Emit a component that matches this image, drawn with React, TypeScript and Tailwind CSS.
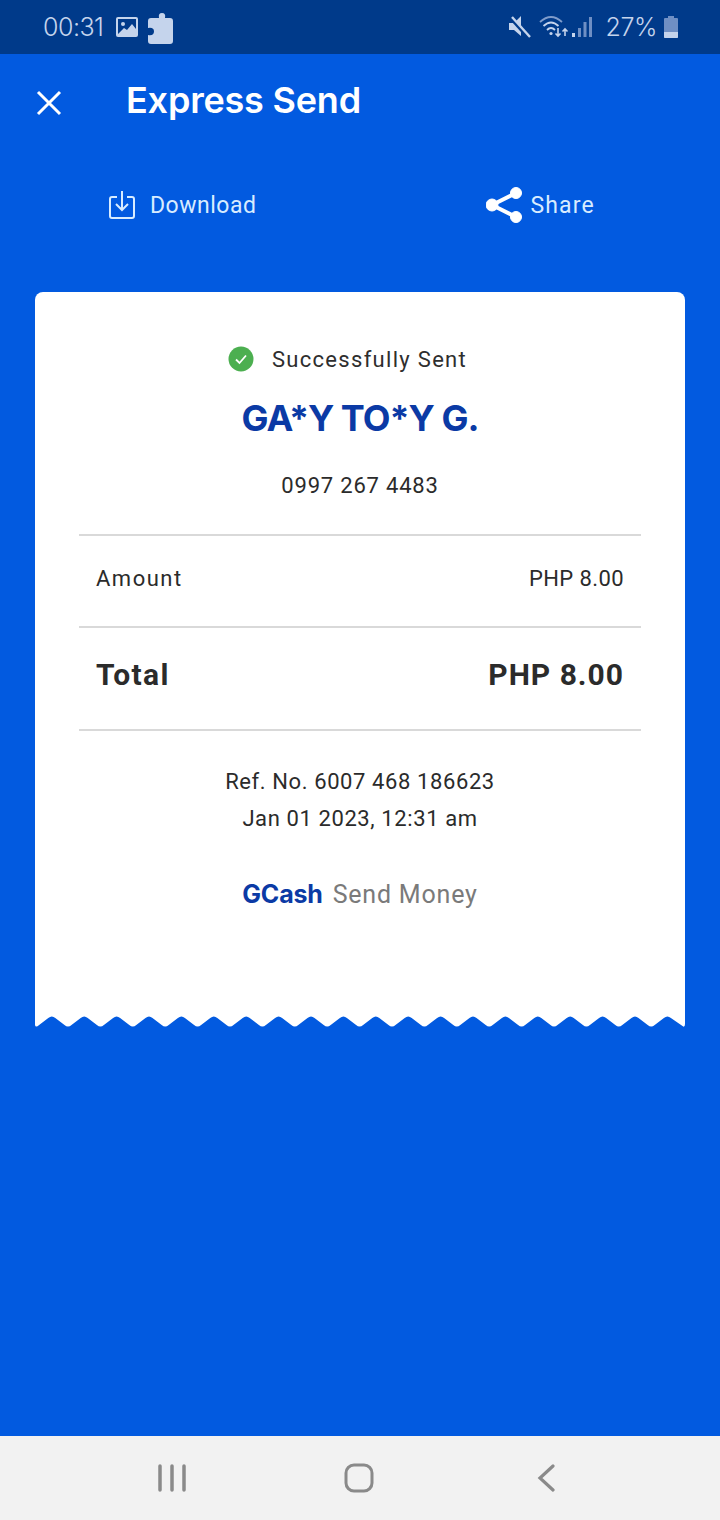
const body = { fontFamily: 'Roboto, "Liberation Sans", sans-serif' };
const head = { fontFamily: 'Inter, "Liberation Sans", sans-serif' };

// torn paper edge: 20 teeth across the card, period 32.4px
function buildWave() {
  const period = 32.4;
  let d = "M0 0 L650 0 L650 8 Q650 10.5 648.6 10.8";
  for (let n = 19; n >= 0; n--) {
    const bottom = 0.6 + n * period;
    const peak = bottom + period / 2;
    d += ` L${peak + 3.5} 2 Q${peak} -1 ${peak - 3.5} 2 L${bottom + 3.5} 9 Q${bottom} 12 ${Math.max(bottom - 3.5, 0)} 9`;
  }
  return d + " Z";
}

function StatusBar() {
  return (
    <div className="flex h-[54px] items-center justify-between bg-[#003a8a] pl-[43px] pr-[42px] text-[#c5d4ec]" style={head}>
      <div className="flex items-center">
        <span className="text-[25px] font-light leading-none tracking-[-0.5px]">00:31</span>
        <svg width="22" height="20" viewBox="0 0 22 20" className="ml-[13px]">
          <rect width="22" height="20" rx="2" fill="#c5d4ec" />
          <rect x="2" y="2" width="18" height="16" fill="#003a8a" />
          <circle cx="7" cy="7" r="2" fill="#c5d4ec" />
          <path d="M2 17 L8 11 L11 13 L16 7 L20 12 L20 18 L2 18 Z" fill="#c5d4ec" />
        </svg>
        <svg width="26" height="32" viewBox="0 0 26 32" className="ml-[9px] mt-[2px]">
          <path
            d="M9 6 L12 6 Q11 1 15 1 Q19 1 18 6 L23 6 Q26 6 26 9 L26 29 Q26 32 23 32 L4 32 Q1 32 1 29 L1 23 Q7 24 7 19.5 Q7 15 1 16 L1 9 Q1 6 4 6 Z"
            fill="#c5d4ec"
          />
        </svg>
      </div>
      <div className="flex items-center">
        <svg width="22" height="24" viewBox="0 0 22 24">
          <path d="M0 8 L5 8 L12 1 L12 21 L5 15 L0 15 Z" fill="#c5d4ec" />
          <path d="M2 3 L20 23" stroke="#003a8a" strokeWidth="4" />
          <path d="M3 2 L21 22" stroke="#c5d4ec" strokeWidth="2.4" />
        </svg>
        <svg width="30" height="24" viewBox="0 0 30 24" className="ml-[8px]" fill="none" stroke="#c5d4ec" strokeWidth="1.8">
          <path d="M1 7 Q12 -3 23 7" stroke="#7f9ccb" />
          <path d="M4.5 11 Q12 4 19.5 11" />
          <path d="M8 15 Q12 11 16 15" />
          <circle cx="12" cy="18.5" r="1.6" fill="#c5d4ec" stroke="none" />
          <path d="M19 13 L19 21 M16.5 18.5 L19 21 L21.5 18.5" strokeWidth="1.6" />
          <path d="M26 21 L26 14 M23.5 16.5 L26 14 L28.500 16.5" strokeWidth="1.6" />
        </svg>
        <svg width="20" height="22" viewBox="0 0 20 22" className="ml-[3px]">
          <rect x="0" y="17" width="3" height="4" fill="#c5d4ec" />
          <rect x="6" y="12" width="3" height="9" fill="#6f8fc4" />
          <rect x="11.500" y="6" width="3" height="15" fill="#6f8fc4" />
          <rect x="17" y="1" width="3" height="20" fill="#6f8fc4" />
        </svg>
        <span className="ml-[13px] text-[25px] font-light leading-none tracking-[-0.4px]">27%</span>
        <svg width="14" height="22" viewBox="0 0 14 22" className="ml-[7px]">
          <rect x="4" y="0" width="6" height="2" fill="#6f8fc4" />
          <rect x="0" y="2" width="14" height="20" rx="1" fill="#6f8fc4" />
          <path d="M0 16 L14 16 L14 21 Q14 22 13 22 L1 22 Q0 22 0 21 Z" fill="#c5d4ec" />
        </svg>
      </div>
    </div>
  );
}

function Row({ left, right, bold }: { left: string; right: string; bold?: boolean }) {
  return (
    <div className={bold ? "flex h-[103px] items-center justify-between border-b-2 border-[#d9d9d9] px-[17px] pb-[9px] text-[#2b2b2b]" : "flex h-[92px] items-center justify-between border-b-2 border-[#d9d9d9] px-[17px] pb-[5px] text-[#2b2b2b]"}>
      <span className={bold ? "text-[30px] font-bold tracking-[1.3px]" : "text-[22px] tracking-[1.5px]"}>{left}</span>
      <span className={bold ? "text-[30px] font-bold tracking-[1px]" : "text-[22px] tracking-[0.4px]"}>{right}</span>
    </div>
  );
}

export default function App() {
  return (
    <div className="flex h-[1520px] w-[720px] flex-col bg-[#025ae0]" style={body}>
      <StatusBar />

      <div className="flex h-[92px] items-center pl-[36px] text-white">
        <svg width="26" height="26" viewBox="0 0 26 26" fill="none" stroke="white" strokeWidth="3" className="mt-[6px]">
          <path d="M2 2 L24 24 M24 2 L2 24" />
        </svg>
        <h1 className="ml-[64px] text-[36px] font-semibold leading-none tracking-[-0.2px]" style={head}>Express Send</h1>
      </div>

      <div className="flex h-[118px] items-center text-[#d8ecff]">
        <div className="ml-[109px] flex items-center">
          <svg width="26" height="30" viewBox="0 0 26 30" fill="none" stroke="#d8ecff" strokeWidth="2">
            <path d="M8 7 L3 7 Q1 7 1 9 L1 26 Q1 28 3 28 L23 28 Q25 28 25 26 L25 9 Q25 7 23 7 L18 7" />
            <path d="M13 1 L13 19 M7 14 L13 20 L19 14" />
          </svg>
          <span className="ml-[15px] pt-[3px] text-[23px] tracking-[0.5px]">Download</span>
        </div>
        <div className="ml-[230px] flex items-center">
          <svg width="36" height="36" viewBox="0 0 36 36" fill="white" stroke="white">
            <circle cx="6" cy="18" r="6" />
            <circle cx="30" cy="6" r="5.500" />
            <circle cx="30" cy="30" r="5.500" />
            <path d="M6 18 L30 6 M6 18 L30 30" strokeWidth="4" />
          </svg>
          <span className="ml-[8px] pt-[3px] text-[23px] tracking-[1.2px]">Share</span>
        </div>
      </div>

      <div className="ml-[35px] mt-[28px] w-[650px]">
        <div className="flex h-[724px] flex-col items-center rounded-t-[8px] bg-white pt-[54px]">
          <div className="mr-[25px] flex h-[26px] items-center text-[#2e2e2e]">
            <svg width="26" height="26" viewBox="0 0 26 26">
              <circle cx="13" cy="13" r="12.500" fill="#4caf50" />
              <path d="M8 13.500 L11.500 17 L18 9.500" fill="none" stroke="white" strokeWidth="1.800" />
            </svg>
            <span className="ml-[18px] text-[22px] tracking-[1.300px]">Successfully Sent</span>
          </div>
          <div className="mt-[24px] text-[36px] font-bold leading-[44px] tracking-[-1px] text-[#0b3aa5]" style={head}>GA*Y TO*Y G.</div>
          <div className="mt-[31px] text-[22px] leading-[30px] tracking-[0.8px] text-[#2b2b2b]">0997 267 4483</div>
          <div className="mt-[33px] w-[562px] border-t-2 border-[#d9d9d9]">
            <Row left="Amount" right="PHP 8.00" />
            <Row left="Total" right="PHP 8.00" bold />
          </div>
          <div className="mt-[32px] text-center text-[22px] leading-[37px] tracking-[0.6px] text-[#2b2b2b]">
            <div>Ref. No. 6007 468 186623</div>
            <div>Jan 01 2023, 12:31 am</div>
          </div>
          <div className="mt-[39px] flex items-center">
            <span className="text-[25px] font-bold tracking-[-0.2px] text-[#0b3aa5]" style={head}>GCash</span>
            <span className="ml-[10px] text-[25px] tracking-[0.8px] text-[#7a7a7a]">Send Money</span>
          </div>
        </div>
        <svg width="650" height="12" viewBox="0 0 650 12" className="block">
          <path d={buildWave()} fill="white" />
        </svg>
      </div>

      <div className="flex-1" />

      <div className="flex h-[84px] items-center bg-[#f2f2f2]">
        <svg width="28" height="28" viewBox="0 0 28 28" className="ml-[158px]" stroke="#8a8a8a" strokeWidth="3.500" strokeLinecap="round">
          <path d="M2 2 L2 26 M14 2 L14 26 M26 2 L26 26" />
        </svg>
        <svg width="30" height="30" viewBox="0 0 30 30" className="ml-[158px]" fill="none" stroke="#8a8a8a" strokeWidth="3">
          <rect x="2" y="2" width="26" height="26" rx="8" />
        </svg>
        <svg width="18" height="28" viewBox="0 0 18 28" className="ml-[163px]" fill="none" stroke="#8a8a8a" strokeWidth="3.200" strokeLinecap="round">
          <path d="M16 2 L3 14 L16 26" />
        </svg>
      </div>
    </div>
  );
}
